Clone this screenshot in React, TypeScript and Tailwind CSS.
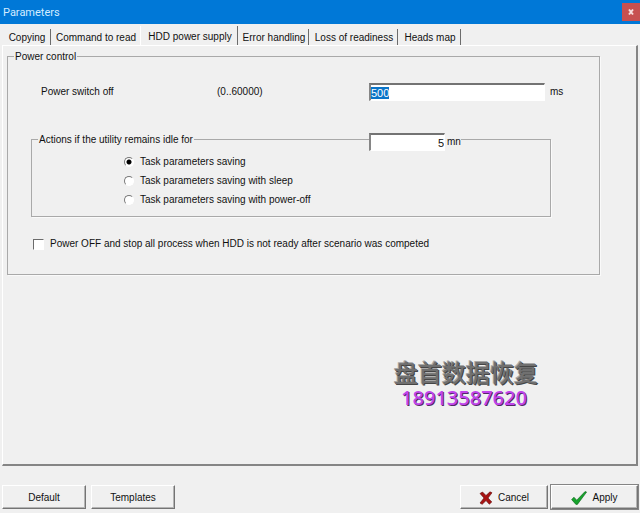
import { useEffect, useRef, useState } from 'react';
import clsx from 'clsx';

const TABS = [
  { name: 'Copying', width: 'w-[49px]' },
  { name: 'Command to read', width: 'w-[89px]' },
  { name: 'HDD power supply', width: 'w-[98px]' },
  { name: 'Error handling', width: 'w-[71px]' },
  { name: 'Loss of readiness', width: 'w-[89px]' },
  { name: 'Heads map', width: 'w-[63px]' },
];

const IDLE_ACTIONS = [
  'Task parameters saving',
  'Task parameters saving with sleep',
  'Task parameters saving with power-off',
];

const INPUT_CLASS =
  'h-[18px] border-t-2 border-l-2 border-t-[#737373] border-l-[#868686] border-r border-b border-r-white border-b-white bg-white text-[11px] outline-none selection:bg-[#0a74c8] selection:text-white';
const LEGEND_CLASS = 'ml-[6px] px-px pt-[2px] leading-[14px]';
const BUTTON_CLASS =
  'flex h-6 items-center justify-center gap-[5px] border border-t-white border-l-white border-r-[#747474] border-b-[#747474] pt-[2px] shadow-[inset_-1px_-1px_0_#b4b4b4]';

function TitleBar() {
  return (
    <header className="flex h-6 items-center justify-between bg-[#0078d7] pl-[3px] text-[#d3ecff]">
      <h1 className="pt-[2px] font-[Roboto,sans-serif] text-[11px]">Parameters</h1>
      <button
        type="button"
        aria-label="Close"
        className="mb-px flex h-[18px] w-[18px] items-center justify-center bg-[#c75050]"
      >
        <svg viewBox="0 0 8 8" className="h-2 w-2" stroke="#f6dede" strokeWidth="2">
          <path d="M2 1.5 6 6.5M6 1.5 2 6.5" />
        </svg>
      </button>
    </header>
  );
}

function Tabs({ active, onChange }: { active: string; onChange: (name: string) => void }) {
  return (
    <div role="tablist" className="flex h-[21px] items-end px-[2px]">
      {TABS.map((tab, i) => {
        const selected = tab.name === active;
        const beforeActive = TABS[i + 1]?.name === active;
        return (
          <button
            key={tab.name}
            type="button"
            role="tab"
            aria-selected={selected}
            onClick={() => onChange(tab.name)}
            className={clsx(
              'flex shrink-0 justify-center border-r pl-[2px] whitespace-nowrap',
              tab.width,
              selected
                ? '-mb-px h-[20px] border-l border-l-white border-r-[#6c6c6c] bg-[#f0f0f0] pt-1'
                : 'h-4 pt-[2px]',
              !selected && (beforeActive ? 'border-r-transparent' : 'border-r-[#6c6c6c]'),
            )}
          >
            {tab.name}
          </button>
        );
      })}
    </div>
  );
}

function IdleActions() {
  const [action, setAction] = useState(IDLE_ACTIONS[0]);

  return (
    <fieldset className="relative mr-12 ml-[23px] border border-[#a9a9a9] pb-2 shadow-[1px_1px_0_#fafafa]">
      <legend className={LEGEND_CLASS}>Actions if the utility remains idle for</legend>
      <label className="absolute -top-[14px] left-[337px] flex items-center gap-[2px] bg-[#f0f0f0]">
        <input
          type="text"
          aria-label="Idle time"
          defaultValue="5"
          className={clsx(INPUT_CLASS, 'w-[76px] text-right')}
        />
        mn
      </label>
      <div className="ml-[92px] flex flex-col gap-[3px] pt-[7px]">
        {IDLE_ACTIONS.map((name) => (
          <label key={name} className="flex items-center gap-[6px] leading-4">
            <input
              type="radio"
              name="idle-action"
              checked={action === name}
              onChange={() => setAction(name)}
              className="h-[10px] w-[10px] appearance-none rounded-full border border-t-[#777] border-l-[#777] border-r-white border-b-white bg-white checked:bg-[radial-gradient(circle,#000_2px,#fff_3px)]"
            />
            {name}
          </label>
        ))}
      </div>
    </fieldset>
  );
}

function PowerControl() {
  const powerOffRef = useRef<HTMLInputElement>(null);

  useEffect(() => {
    powerOffRef.current?.focus();
    powerOffRef.current?.select();
  }, []);

  return (
    <fieldset className="mr-9 ml-1 border border-[#a9a9a9] pb-[22px] shadow-[1px_1px_0_#fafafa]">
      <legend className={LEGEND_CLASS}>Power control</legend>
      <div className="mt-[19px] flex items-center pl-[33px]">
        <label htmlFor="power-off" className="w-44">
          Power switch off
        </label>
        <span className="w-[152px]">(0..60000)</span>
        <input
          id="power-off"
          ref={powerOffRef}
          type="text"
          defaultValue="500"
          className={clsx(INPUT_CLASS, 'mr-[5px] w-44')}
        />
        ms
      </div>
      <div className="mt-[30px]">
        <IdleActions />
      </div>
      <label className="mt-[19px] flex items-center gap-[6px] pl-[25px] leading-4">
        <input
          type="checkbox"
          className="h-[11px] w-[11px] appearance-none border border-t-[#6b6b6b] border-l-[#6b6b6b] border-r-white border-b-white bg-white checked:bg-[#333]"
        />
        Power OFF and stop all process when HDD is not ready after scenario was competed
      </label>
    </fieldset>
  );
}

function Watermark() {
  return (
    <div className="mt-auto mr-[98px] mb-[54px] self-end text-center">
      <p className="font-['Noto_Sans_CJK_SC',sans-serif] text-[24px] leading-7 font-medium text-[#707070] [text-shadow:1px_1px_0_#454545,-1px_-1px_0_#a8a8a8]">
        盘首数据恢复
      </p>
      <p className="mr-1 font-['Noto_Sans',sans-serif] text-[20px] leading-6 font-medium text-[#c044ec] [text-shadow:1px_1px_0_#54276a]">
        18913587620
      </p>
    </div>
  );
}

function Footer() {
  return (
    <footer className="flex gap-[5px] px-[2px] pt-[19px] pb-1">
      <button type="button" className={clsx(BUTTON_CLASS, 'w-[84px]')}>
        Default
      </button>
      <button type="button" className={clsx(BUTTON_CLASS, 'w-[84px]')}>
        Templates
      </button>
      <button type="button" className={clsx(BUTTON_CLASS, 'ml-auto w-[88px]')}>
        <svg viewBox="0 0 14 14" className="h-[14px] w-[14px]" fill="#a81313" stroke="#5d0909" strokeWidth=".6">
          <path d="M1 2.5 3.5 1 7 4.5 11 .8l2 1L9 7l3.8 4-2.5 2.2L7 9.6 3.2 13.3 1 12l4-5Z" />
        </svg>
        Cancel
      </button>
      <button
        type="button"
        className={clsx(BUTTON_CLASS, '-ml-[2px] w-[87px] outline outline-[#858585]')}
      >
        <svg viewBox="0 0 16 14" className="h-[14px] w-4" fill="#16a32c" stroke="#0b6119" strokeWidth=".6">
          <path d="M.6 8.5 3 6.2l2.7 3L14 .6l1.6.5L6.4 13.4H4.9Z" />
        </svg>
        Apply
      </button>
    </footer>
  );
}

export default function App() {
  const [tab, setTab] = useState('HDD power supply');

  return (
    <main className="flex min-h-screen flex-col bg-[#f0f0f0] font-['Liberation_Sans',sans-serif] text-[10px] leading-[14px] text-[#101010]">
      <TitleBar />
      <Tabs active={tab} onChange={setTab} />
      <section className="mr-[2px] ml-[2px] flex grow flex-col border-t border-r-2 border-b-2 border-l border-t-white border-r-[#858585] border-b-[#858585] border-l-white pt-[2px]">
        <PowerControl />
        <Watermark />
      </section>
      <Footer />
    </main>
  );
}
